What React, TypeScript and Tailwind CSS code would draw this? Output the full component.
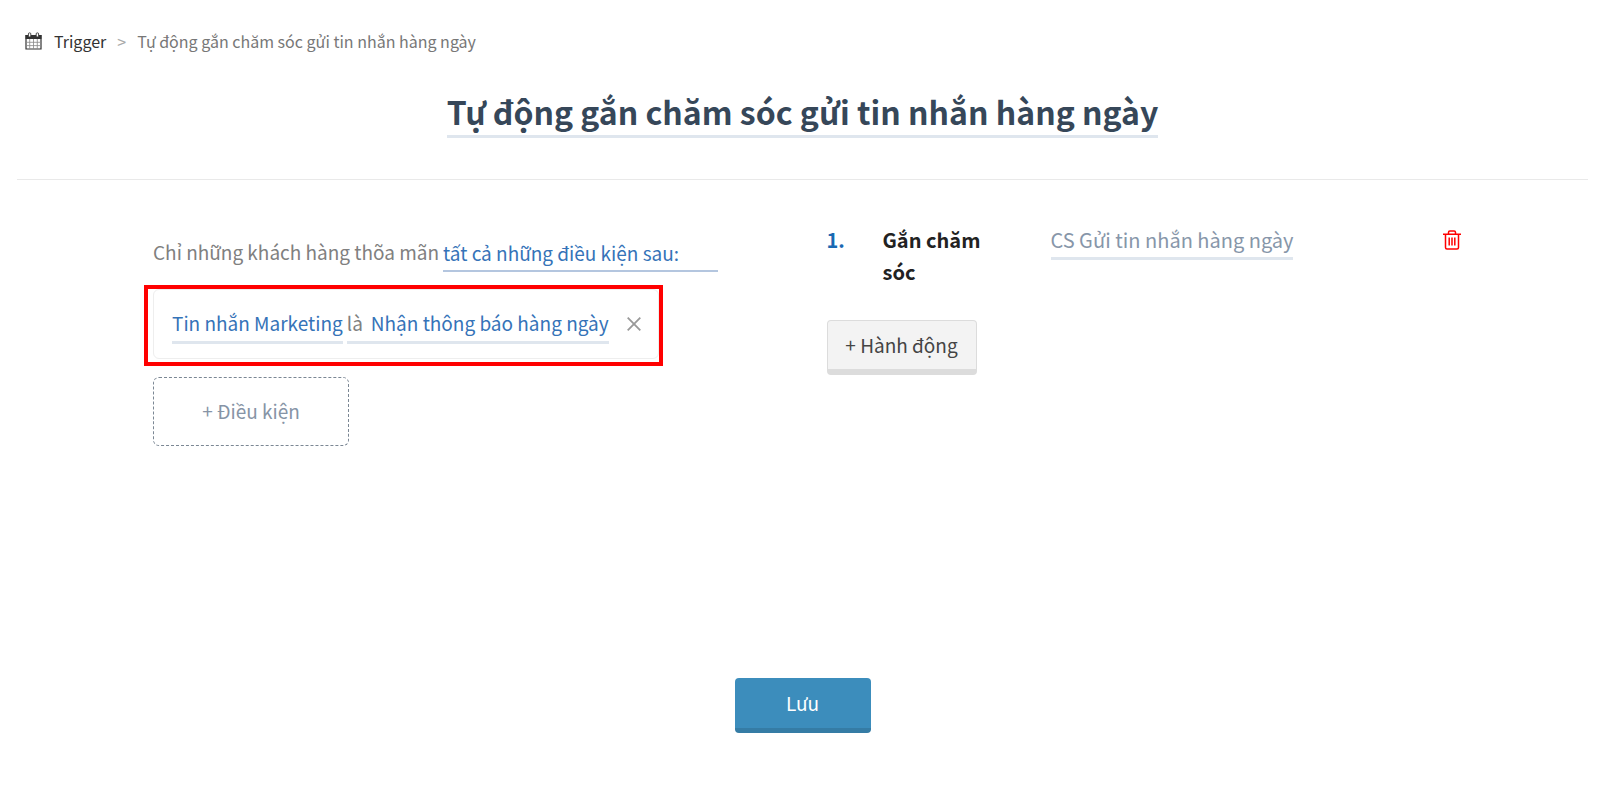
import type { ReactNode } from "react";

const breadcrumb = ["Trigger", "Tự động gắn chăm sóc gửi tin nhắn hàng ngày"];

const matchModes = ["tất cả những điều kiện sau:", "một trong những điều kiện sau:"];

function CalendarIcon() {
  return (
    <svg viewBox="0 0 17 18" className="h-[18px] w-[17px]" fill="none" stroke="#333" aria-hidden="true">
      <path d="M1 3.5h15v13.5H1z" strokeWidth="1.2" />
      <path d="M.5 3h16v4H.5z" fill="#333" stroke="none" />
      <path d="M4.7 7v10M8.5 7v10M12.3 7v10M1 10.3h15M1 13.6h15" stroke="#888" strokeWidth="0.8" />
      <rect x="3.4" y="0.9" width="2.4" height="4" rx="1" fill="#fff" strokeWidth="0.9" />
      <rect x="11.2" y="0.9" width="2.4" height="4" rx="1" fill="#fff" strokeWidth="0.9" />
    </svg>
  );
}

function CloseIcon() {
  return (
    <svg viewBox="0 0 14 14" className="size-[14px]" fill="none" stroke="#999" strokeWidth="1.8" aria-hidden="true">
      <path d="M.7.7l12.6 12.6M13.3.7L.7 13.3" />
    </svg>
  );
}

function TrashIcon() {
  return (
    <svg viewBox="0 0 18 20" className="h-5 w-[18px]" fill="none" stroke="#f00" strokeWidth="1.5" aria-hidden="true">
      <path d="M0 4.2h18M2.5 4.2v13.3c0 .9.6 1.5 1.5 1.5h10c.9 0 1.5-.6 1.5-1.5V4.2" />
      <path d="M5.5 4V2.4c0-.8.6-1.4 1.4-1.4h4.2c.8 0 1.4.6 1.4 1.4V4" />
      <path d="M6.2 7.5v8M9 7.5v8M11.8 7.5v8" />
    </svg>
  );
}

function Underlined({ children, className }: { children: ReactNode; className: string }) {
  return (
    <button type="button" className={`border-b-3 border-[#dfe6ee] whitespace-nowrap ${className}`}>
      {children}
    </button>
  );
}

function Conditions() {
  return (
    <section className="pl-[136px] text-[19px] leading-8">
      <div className="flex items-start pt-3">
        <label htmlFor="match-mode" className="mr-1 whitespace-nowrap text-[#808080]">
          Chỉ những khách hàng thõa mãn
        </label>
        <select
          id="match-mode"
          className="h-9 w-[275px] appearance-none border-b-2 border-[#b4c6df] text-[#3573b8]"
        >
          {matchModes.map((mode) => (
            <option key={mode}>{mode}</option>
          ))}
        </select>
      </div>

      {/* highlighted condition */}
      <div className="mt-[13px] -ml-[9px] w-[519px] border-4 border-[#f00] pb-[3px] pl-[5px]">
        <div className="flex h-[70px] items-center rounded-md border border-[#eee] pt-0.5 pl-[18px]">
          <Underlined className="mr-1 pb-0.5 text-[#3573b8]">Tin nhắn Marketing</Underlined>
          <Underlined className="pb-0.5 text-[#3573b8]">
            <span className="mr-2 text-[#808080]">là</span>
            Nhận thông báo hàng ngày
          </Underlined>
          <button type="button" aria-label="Xóa điều kiện" className="ml-[18px] pb-0.5">
            <CloseIcon />
          </button>
        </div>
      </div>

      <button
        type="button"
        className="mt-[11px] h-[69px] w-[196px] rounded-md border border-dashed border-[#7b8794] pb-0.5 text-[#8694a6]"
      >
        + Điều kiện
      </button>
    </section>
  );
}

function Actions() {
  return (
    <section className="pl-6 text-[20px] leading-8">
      <div className="flex items-start">
        <span className="w-14 font-bold text-[#1a69b3]">1.</span>
        <span className="w-[120px] font-bold text-[#222]">Gắn chăm sóc</span>
        <Underlined className="ml-12 pb-px text-[#8796a9]">CS Gửi tin nhắn hàng ngày</Underlined>
        <button type="button" aria-label="Xóa hành động" className="mt-[6px] mr-[127px] ml-auto">
          <TrashIcon />
        </button>
      </div>
      <button
        type="button"
        className="mt-8 h-[55px] w-[150px] rounded border border-b-[6px] border-[#dcdcdc] bg-[#f3f3f3] text-[19px] text-[#444]"
      >
        + Hành động
      </button>
    </section>
  );
}

export default function App() {
  return (
    <main className="min-h-screen bg-white pr-3 pl-[17px] font-['Noto_Sans_CJK_SC','Noto_Sans',sans-serif]">
      <nav className="flex items-center pt-[29px] pl-2 text-[16px] leading-6">
        <CalendarIcon />
        <a href="#trigger" className="ml-3 text-[#333]">
          {breadcrumb[0]}
        </a>
        <span className="mx-[11px] text-[16px] text-[#aaa]">&gt;</span>
        <span className="text-[#777]">{breadcrumb[1]}</span>
      </nav>

      <header className="border-b border-[#e9e9e9] pt-[34px] pb-[41px] text-center">
        <h1 className="inline-block border-b-3 border-[#dfe6ee] text-[32px] leading-[48px] font-bold text-[#364759]">
          {breadcrumb[1]}
        </h1>
      </header>

      <form className="pt-11" onSubmit={(e) => e.preventDefault()}>
        <div className="grid min-h-[454px] grid-cols-2 items-start">
          <Conditions />
          <Actions />
        </div>
        <div className="text-center">
          <button
            type="submit"
            className="h-[55px] w-[136px] rounded border-b-[5px] border-[#357ca5] bg-[#3c8dbc] text-[19px] text-white"
          >
            Lưu
          </button>
        </div>
      </form>
    </main>
  );
}
